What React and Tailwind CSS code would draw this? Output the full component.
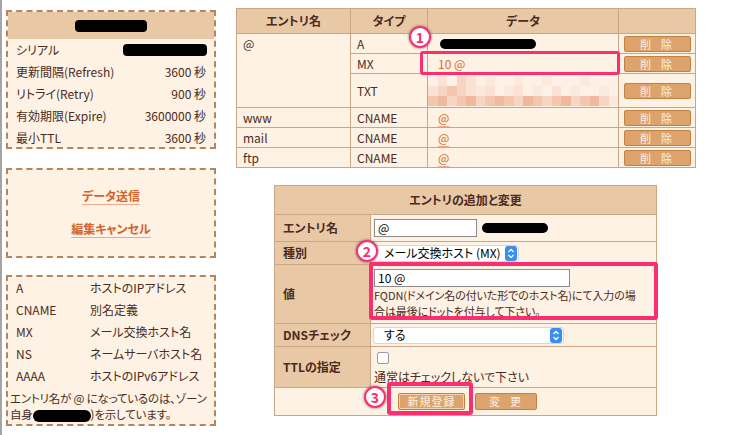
import React from "react";

const pixPalette = [
  "bg-[#fdf0e6]",
  "bg-[#fbe2d4]",
  "bg-[#f8d4c2]",
  "bg-[#f4c6b0]",
  "bg-[#efb9a0]",
  "bg-[#fce9de]",
];

const pixRows = [
  [0, 1, 0, 2, 1, 0, 5, 0, 0, 5, 0, 0, 5, 0, 0, 0, 5, 0, 0, 0],
  [1, 2, 3, 2, 1, 5, 1, 0, 5, 1, 0, 5, 0, 1, 0, 5, 0, 0, 5, 0],
  [3, 4, 2, 3, 4, 2, 3, 4, 3, 2, 4, 3, 2, 3, 4, 2, 3, 4, 2, 5],
];

const DelButton = () => (
  <button className="w-[67px] h-[16px] rounded-[2px] bg-[#dca46c] border border-[#c3813f] text-[#fdf0e2] text-[11px] leading-none tracking-[10px] pl-[8px]">
    削除
  </button>
);

const Badge = ({ n, className }) => (
  <span
    className={
      "absolute w-[22px] h-[22px] rounded-full bg-white border-2 border-[#fb2f6f] text-[#fb2f6f] text-[14px] font-bold leading-none flex items-center justify-center shadow-[0_0_2px_1px_rgba(0,0,0,0.25)] " +
      className
    }
  >
    {n}
  </span>
);

const Stepper = () => (
  <span className="w-[12px] h-[15px] rounded-[3px] bg-[#3b8ef0] flex items-center justify-center">
    <svg width="8" height="11" viewBox="0 0 8 11" fill="none" stroke="white" strokeWidth="1.3">
      <path d="M1.5 4 L4 1.5 L6.5 4" />
      <path d="M1.5 7 L4 9.5 L6.5 7" />
    </svg>
  </span>
);

const App = () => {
  const soa = [
    ["更新間隔(Refresh)", "3600 秒"],
    ["リトライ(Retry)", "900 秒"],
    ["有効期限(Expire)", "3600000 秒"],
    ["最小TTL", "3600 秒"],
  ];
  const legend = [
    ["A", "ホストのIPアドレス"],
    ["CNAME", "別名定義"],
    ["MX", "メール交換ホスト名"],
    ["NS", "ネームサーバホスト名"],
    ["AAAA", "ホストのIPv6アドレス"],
  ];
  const td = "border border-[#caa687]";

  return (
    <div className="relative w-[750px] h-[435px] bg-white overflow-hidden text-[12px] text-[#4b2b22] font-['Noto_Sans_CJK_JP',sans-serif] [font-feature-settings:'palt']">
      <div className="flex h-full">
        <div className="w-[2px] h-full bg-[#a5a5a5]" />

        {/* left column */}
        <div className="w-[210px] ml-[4px] pt-[10px] flex flex-col">
          <div className="h-[139px] border-2 border-dashed border-[#b3865f] bg-[#fdf2e3]">
            <div className="h-[27px] bg-[#e9c9a5] flex items-center justify-center">
              <span className="w-[72px] h-[12px] rounded-[4px] bg-black" />
            </div>
            <div className="h-[22px] flex items-center justify-between pl-[8px] pr-[7px]">
              <span>シリアル</span>
              <span className="w-[84px] h-[12px] rounded-[4px] bg-black" />
            </div>
            {soa.map(([k, v]) => (
              <div key={k} className="h-[22px] flex items-center justify-between pl-[8px] pr-[8px]">
                <span>{k}</span>
                <span>{v}</span>
              </div>
            ))}
          </div>

          <div className="mt-[19px] h-[90px] border-2 border-dashed border-[#b3865f] bg-[#fdf2e3] flex flex-col items-center pt-[17px] gap-[15px]">
            <a className="leading-[18px] font-bold text-[#d4622c] underline decoration-[#f0a98a] underline-offset-[3px]">
              データ送信
            </a>
            <a className="leading-[18px] font-bold text-[#d4622c] underline decoration-[#f0a98a] underline-offset-[3px]">
              編集キャンセル
            </a>
          </div>

          <div className="mt-[17px] h-[151px] border-2 border-dashed border-[#b3865f] bg-[#fdf2e3]">
            {legend.map(([k, v]) => (
              <div key={k} className="h-[22px] flex items-center pl-[8px]">
                <span className="w-[74px]">{k}</span>
                <span>{v}</span>
              </div>
            ))}
            <p className="pl-[2px] pt-[3px] leading-[16px] whitespace-nowrap text-[11.5px] tracking-[-0.2px]">
              エントリ名が @ になっているのは、ゾーン
              <br />
              自身
              <span className="inline-block align-middle w-[58px] h-[12px] rounded-full bg-black" />
              )を示しています。
            </p>
          </div>
        </div>

        {/* right area */}
        <div className="ml-[20px] pt-[8px] flex flex-col">
          <table className="w-[459px] table-fixed border-collapse bg-[#fdf2e3]">
            <colgroup>
              <col className="w-[114px]" />
              <col className="w-[77px]" />
              <col className="w-[191px]" />
              <col className="w-[77px]" />
            </colgroup>
            <thead>
              <tr className="h-[25px] bg-[#e9c9a5] font-bold">
                <th className={td}>エントリ名</th>
                <th className={td}>タイプ</th>
                <th className={td}>データ</th>
                <th className={td}></th>
              </tr>
            </thead>
            <tbody>
              <tr className="h-[20px]">
                <td rowSpan={3} className={td + " align-top pl-[6px] pt-[1px]"}>
                  @
                </td>
                <td className={td + " pl-[6px]"}>A</td>
                <td className={td + " pl-[12px]"}>
                  <span className="block w-[96px] h-[10px] rounded-full bg-black" />
                </td>
                <td className={td + " text-center"}>
                  <DelButton />
                </td>
              </tr>
              <tr className="h-[20px]">
                <td className={td + " pl-[6px]"}>MX</td>
                <td className={td + " pl-[10px] text-[#d8692f]"}>10 @</td>
                <td className={td + " text-center"}>
                  <DelButton />
                </td>
              </tr>
              <tr className="h-[34px]">
                <td className={td + " pl-[6px]"}>TXT</td>
                <td className={td + " px-0"}>
                  <div className="flex flex-col">
                    {pixRows.map((row, i) => (
                      <div key={i} className="flex">
                        {row.map((c, j) => (
                          <span key={j} className={"w-[9.5px] h-[10px] " + pixPalette[c]} />
                        ))}
                      </div>
                    ))}
                  </div>
                </td>
                <td className={td + " text-center"}>
                  <DelButton />
                </td>
              </tr>
              {["www", "mail", "ftp"].map((n) => (
                <tr key={n} className="h-[20px]">
                  <td className={td + " pl-[6px]"}>{n}</td>
                  <td className={td + " pl-[6px]"}>CNAME</td>
                  <td className={td + " pl-[10px]"}>
                    <span className="text-[#d8692f] underline decoration-[#f0a98a] underline-offset-[3px]">@</span>
                  </td>
                  <td className={td + " text-center"}>
                    <DelButton />
                  </td>
                </tr>
              ))}
            </tbody>
          </table>

          <table className="ml-[38px] mt-[17px] w-[382px] table-fixed border-collapse bg-[#fdf2e3]">
            <colgroup>
              <col className="w-[96px]" />
              <col className="w-[286px]" />
            </colgroup>
            <thead>
              <tr className="h-[29px] bg-[#e9c9a5] font-bold">
                <th colSpan={2} className={td}>
                  エントリの追加と変更
                </th>
              </tr>
            </thead>
            <tbody>
              <tr className="h-[27px]">
                <td className={td + " bg-[#e9c9a5] font-bold pl-[8px]"}>エントリ名</td>
                <td className={td + " pl-[3px]"}>
                  <div className="flex items-center gap-[5px]">
                    <span className="w-[103px] h-[18px] bg-white border border-[#8d8d8d] pl-[3px] leading-[16px] text-black">@</span>
                    <span className="w-[66px] h-[10px] rounded-full bg-black" />
                  </div>
                </td>
              </tr>
              <tr className="h-[23px]">
                <td className={td + " bg-[#e9c9a5] font-bold pl-[8px]"}>種別</td>
                <td className={td + " pl-[2px]"}>
                  <div className="w-[146px] h-[17px] bg-white rounded-[3px] border border-[#d6d6d6] flex items-center justify-between pl-[10px] pr-[1px] text-black">
                    <span>メール交換ホスト (MX)</span>
                    <Stepper />
                  </div>
                </td>
              </tr>
              <tr className="h-[59px]">
                <td className={td + " bg-[#e9c9a5] font-bold pl-[8px]"}>値</td>
                <td className={td + " pl-[3px] pt-[4px] align-top"}>
                  <span className="block w-[196px] h-[18px] bg-white border border-[#8d8d8d] pl-[3px] leading-[16px] text-black">10 @</span>
                  <p className="leading-[16px] whitespace-nowrap text-[11px] tracking-[-0.1px]">
                    FQDN(ドメイン名の付いた形でのホスト名)にて入力の場
                    <br />
                    合は最後にドットを付与して下さい。
                  </p>
                </td>
              </tr>
              <tr className="h-[23px]">
                <td className={td + " bg-[#e9c9a5] font-bold pl-[8px]"}>DNSチェック</td>
                <td className={td + " pl-[2px]"}>
                  <div className="w-[191px] h-[17px] bg-white rounded-[3px] border border-[#d6d6d6] flex items-center justify-between pl-[10px] pr-[1px] text-black">
                    <span>する</span>
                    <Stepper />
                  </div>
                </td>
              </tr>
              <tr className="h-[41px]">
                <td className={td + " bg-[#e9c9a5] font-bold pl-[8px]"}>TTLの指定</td>
                <td className={td + " pl-[3px] align-top pt-[5px]"}>
                  <span className="block ml-[3px] w-[12px] h-[12px] rounded-[2px] bg-white border border-[#9d9d9d]" />
                  <p className="leading-[17px] mt-[4px]">通常はチェックしないで下さい</p>
                </td>
              </tr>
              <tr className="h-[28px]">
                <td colSpan={2} className={td}>
                  <div className="flex justify-center gap-[10px] pl-[4px]">
                    <button className="w-[67px] h-[17px] rounded-[2px] bg-[#dca46c] border border-[#c3813f] shadow-[inset_0_0_0_1px_#f1d2ae] text-[#fdf0e2] text-[11px] leading-none tracking-[1px]">
                      新規登録
                    </button>
                    <button className="w-[62px] h-[17px] rounded-[2px] bg-[#dca46c] border border-[#c3813f] text-[#fdf0e2] text-[11px] leading-none tracking-[10px] pl-[8px]">
                      変更
                    </button>
                  </div>
                </td>
              </tr>
            </tbody>
          </table>
        </div>
      </div>

      {/* annotation overlays */}
      <div className="absolute left-[420px] top-[51px] w-[200px] h-[24px] rounded-[3px] border-[3px] border-[#fb2f6f]" />
      <div className="absolute left-[369px] top-[262px] w-[289px] h-[58px] rounded-[3px] border-[4px] border-[#fb2f6f]" />
      <div className="absolute left-[387px] top-[382px] w-[86px] h-[33px] rounded-[3px] border-[4px] border-[#fb2f6f]" />
      <Badge n="1" className="left-[409px] top-[26px]" />
      <Badge n="2" className="left-[356px] top-[240px]" />
      <Badge n="3" className="left-[364px] top-[386px]" />
    </div>
  );
};

export default App;
